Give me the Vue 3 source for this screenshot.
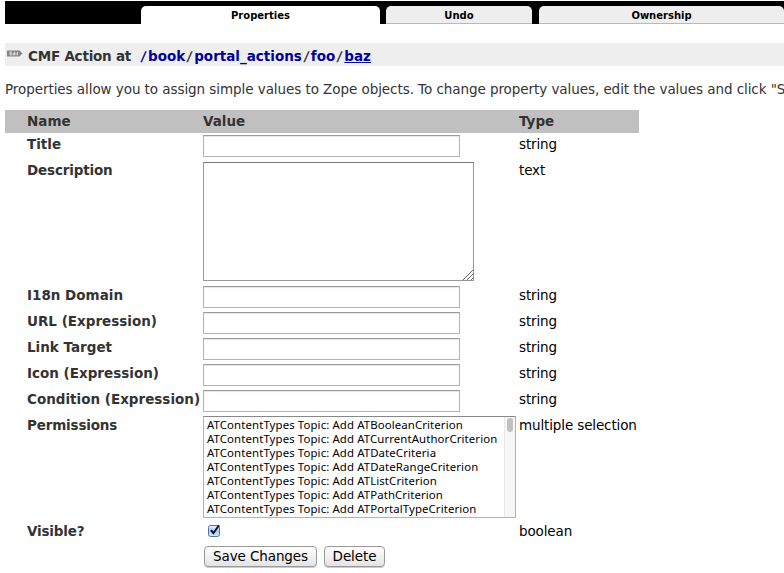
<script setup>
import { ref } from 'vue'

const values = ref({})
const stringsAfter = [
  'I18n Domain',
  'URL (Expression)',
  'Link Target',
  'Icon (Expression)',
  'Condition (Expression)',
]
const visible = ref(true)
const permissions = [
  'ATBooleanCriterion',
  'ATCurrentAuthorCriterion',
  'ATDateCriteria',
  'ATDateRangeCriterion',
  'ATListCriterion',
  'ATPathCriterion',
  'ATPortalTypeCriterion',
]
</script>

<template>
  <div class="page">
    <nav class="tabs">
      <a class="tab active">Properties</a>
      <a class="tab undo">Undo</a>
      <a class="tab owner">Ownership</a>
    </nav>

    <header class="title-bar">
      <svg class="icon" width="16" height="8" viewBox="0 0 16 8">
        <path d="M0 0.5H12.5L15.5 3.5L12.5 6.5H0Z" fill="#858585" />
        <path d="M3 1.8V5M3 2H5M3 3.5H4.7M3 5H5M7.6 1.8V5H6V3.3H7.6M9 2.7V5.3M10.5 2V5.3" fill="none" stroke="#e8e8e8" stroke-width=".8" />
      </svg>
      <span class="kind">CMF Action at</span>
      <span class="path"><a><i>/</i>book</a><i>/</i><a>portal_actions</a><i>/</i><a>foo</a><i>/</i><a class="current">baz</a></span>
    </header>

    <p class="help">Properties allow you to assign simple values to Zope objects. To change property values, edit the values and click "Save Changes".</p>

    <form class="form" @submit.prevent>
      <div class="row head"><b>Name</b><b>Value</b><b>Type</b></div>
      <div class="row">
        <b>Title</b>
        <div><input v-model="values.Title" class="field" type="text" /></div>
        <span>string</span>
      </div>
      <div class="row tall">
        <b class="snug">Description</b>
        <div class="area-wrap">
          <textarea class="area"></textarea>
          <svg class="grip" width="12" height="12" viewBox="0 0 12 12">
            <path d="M0.5 11.5L11.5 0.5M4.5 11.5L11.5 4.5M8.5 11.5L11.5 8.5" stroke="#666" fill="none" />
          </svg>
        </div>
        <span>text</span>
      </div>
      <div v-for="name in stringsAfter" :key="name" class="row">
        <b>{{ name }}</b>
        <div><input v-model="values[name]" class="field" type="text" /></div>
        <span>string</span>
      </div>
      <div class="row perms">
        <b class="snug">Permissions</b>
        <div class="list">
          <ul>
            <li v-for="p in permissions" :key="p">ATContentTypes Topic: Add {{ p }}</li>
          </ul>
          <div class="track"><div class="thumb"></div></div>
        </div>
        <span>multiple selection</span>
      </div>
      <div class="row">
        <b class="snug">Visible?</b>
        <div class="check" @click="visible = !visible">
          <svg width="14" height="15" viewBox="0 0 14 15">
            <defs>
              <linearGradient id="box" x1="0" y1="0" x2="0" y2="1">
                <stop offset="0" stop-color="#eaf4ff" />
                <stop offset=".5" stop-color="#a5cdf3" />
                <stop offset="1" stop-color="#c5efff" />
              </linearGradient>
            </defs>
            <rect x="0.5" y="2.5" width="11" height="11" rx="2" fill="url(#box)" stroke="#5c6fa0" />
            <path v-if="visible" d="M3 7.2L5.4 10.2L11 2.2" fill="none" stroke="#0b1226" stroke-width="2" />
          </svg>
        </div>
        <span>boolean</span>
      </div>
      <div class="buttons">
        <button class="save">Save Changes</button>
        <button class="delete">Delete</button>
      </div>
    </form>
  </div>
</template>

<style>
body {
  background: #fff;
  overflow: hidden;
}
</style>

<style scoped>
.page {
  box-sizing: border-box;
  width: 784px;
  height: 573px;
  padding: 1px 0 0 5px;
  overflow: hidden;
  background: #fff;
  font-family: "DejaVu Sans", Verdana, sans-serif;
  font-size: 13.5px;
  color: #000;
}
.tabs {
  display: flex;
  height: 23px;
  box-sizing: border-box;
  padding: 5px 0 0 136px;
  background: #000;
}
.tab {
  box-sizing: border-box;
  height: 18px;
  border-radius: 5px 5px 0 0;
  background: #eee;
  border-bottom: 1px solid #b8b8b8;
  font-size: 10px;
  font-weight: bold;
  line-height: 19px;
  text-align: center;
}
.active {
  width: 239px;
  background: #fff;
  border-bottom-color: #fff;
}
.undo {
  width: 146px;
  margin-left: 6px;
}
.owner {
  width: 245px;
  margin-left: 7px;
}
.title-bar {
  display: flex;
  height: 23px;
  margin-top: 19px;
  background: #eee;
  font-weight: bold;
  line-height: 27px;
  color: #333;
  white-space: pre;
}
.icon {
  margin: 7px 5px 0 2px;
  width: 16px;
  flex: none;
}
.kind {
  width: 111px;
  letter-spacing: -0.22px;
}
.path i {
  display: inline-block;
  width: 9px;
  font-style: normal;
  text-align: center;
  transform: skewX(-7deg);
}
.path a {
  color: #009;
}
.path .current {
  text-decoration: underline;
}
.help {
  margin: 14px 0 0;
  height: 30px;
  line-height: 19px;
  letter-spacing: -0.065px;
  color: #333;
  white-space: nowrap;
}
.form {
  width: 634px;
}
.row {
  display: grid;
  grid-template-columns: 176px 316px 1fr;
  box-sizing: border-box;
  height: 26px;
  padding-left: 22px;
  line-height: 23px;
  white-space: nowrap;
}
.row > span {
  letter-spacing: -0.13px;
}
.row b {
  color: #333;
}
.row .snug {
  letter-spacing: -0.17px;
}
.head {
  height: 23px;
  background: #c0c0c0;
}
.tall {
  height: 125px;
}
.perms {
  height: 106px;
}
.field {
  display: block;
  box-sizing: border-box;
  width: 257px;
  height: 22px;
  margin: 2px 0 0;
  padding: 2px 3px;
  border: 1px solid #b3b3b3;
  border-top-color: #999;
  border-radius: 0;
  box-shadow: inset 0 1px 1px #e6e6e6;
  background: #fff;
  outline: none;
}
.area-wrap {
  position: relative;
  width: 271px;
  height: 119px;
  margin-top: 3px;
}
.area {
  display: block;
  box-sizing: border-box;
  width: 100%;
  height: 100%;
  border: 1px solid #999;
  border-top-color: #777;
  resize: none;
  outline: none;
}
.grip {
  position: absolute;
  right: 0;
  bottom: 0;
}
.list {
  display: flex;
  box-sizing: border-box;
  width: 313px;
  height: 102px;
  margin-top: 2px;
  border: 1px solid #b3b3b3;
  border-top-color: #888;
}
.list ul {
  flex: 1;
  margin: 0;
  padding: 1px 0 0 3px;
  list-style: none;
  font-family: "Noto Sans", sans-serif;
  font-size: 11.4px;
  letter-spacing: 0.11px;
  line-height: 14px;
}
.track {
  box-sizing: border-box;
  width: 11px;
  padding: 1px 2px;
  background: #f7f7f7;
  border-left: 1px solid #e9e9e9;
}
.thumb {
  width: 6px;
  height: 14px;
  border-radius: 3px;
  background: #c1c1c1;
}
.check {
  padding: 3px 0 0 5px;
  line-height: 0;
}
.buttons {
  display: flex;
  gap: 7px;
  padding-left: 199px;
}
.buttons button {
  box-sizing: border-box;
  height: 21px;
  padding: 0;
  border: 1px solid #999;
  border-radius: 4px;
  background: linear-gradient(#fff, #f1f1f1 50%, #e3e3e3);
  box-shadow: 0 1px 0 #ccc;
  font: 13.5px/19px "DejaVu Sans", Verdana, sans-serif;
  letter-spacing: -0.1px;
  color: #000;
}
.save {
  width: 113px;
}
.delete {
  width: 61px;
}
</style>
